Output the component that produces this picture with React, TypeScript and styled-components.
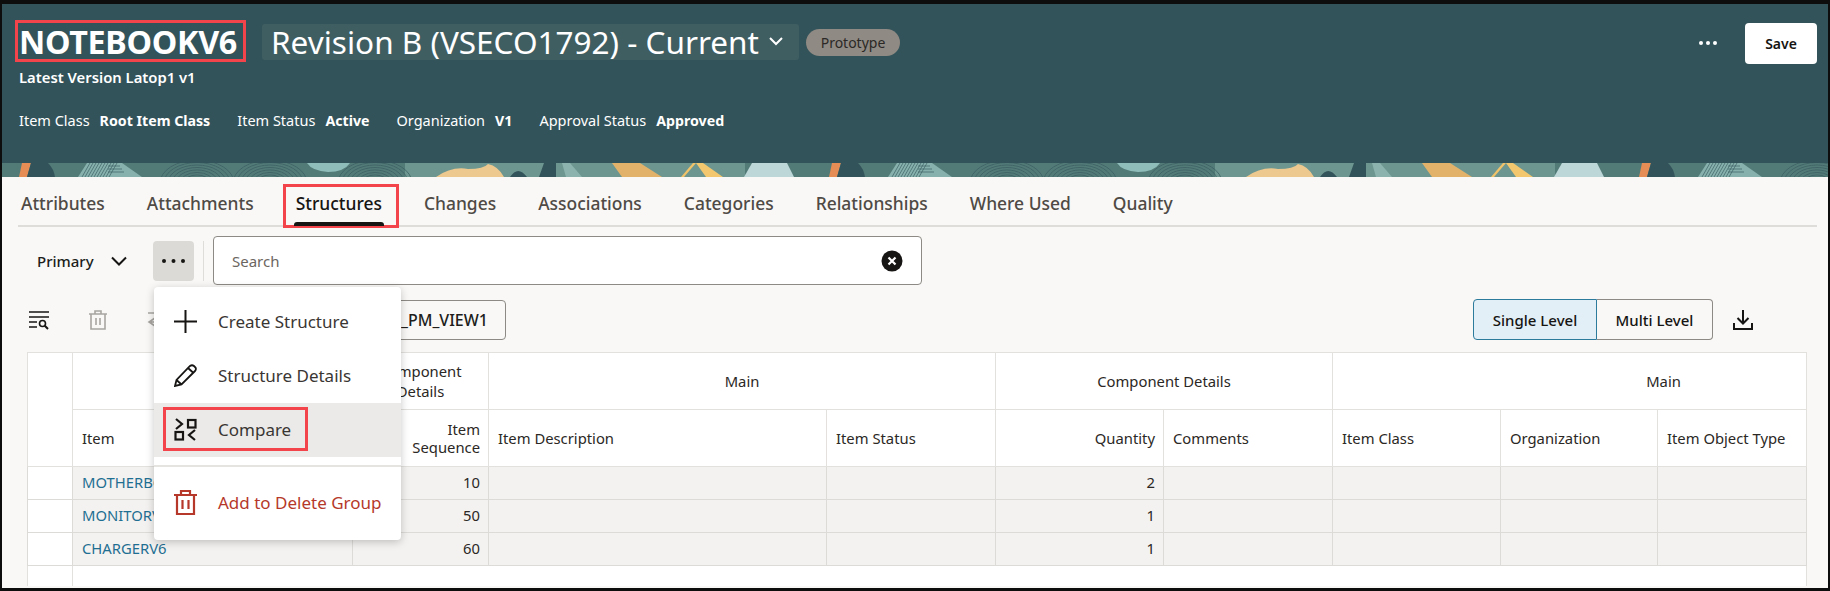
import { styled, createGlobalStyle } from "styled-components";

const GlobalStyle = createGlobalStyle`
  html, body { margin: 0; padding: 0; background: #0d0d0d; }
  body { font-family: "Noto Sans", "Open Sans", sans-serif; }
  * { box-sizing: border-box; }
`;

const Page = styled.div`
  width: 1830px;
  height: 591px;
  padding: 4px 2px 3px;
  display: flex;
  flex-direction: column;
  overflow: hidden;
  background: #0d0d0d;
`;

const Header = styled.header`
  height: 159px;
  flex: none;
  background: #33535a;
  color: #fff;
  padding: 16px 11px 0 13px;
`;

const TitleRow = styled.div`
  display: flex;
  align-items: flex-start;
  height: 44px;
`;

const Title = styled.h1`
  margin: 0;
  width: 231px;
  height: 42px;
  border: 3px solid #f2444a;
  padding-left: 1px;
  display: flex;
  align-items: center;
  font-size: 32.3px;
  font-weight: 700;
  letter-spacing: -0.3px;
`;

const RevisionSelect = styled.div`
  margin: 4px 0 0 16px;
  width: 537px;
  height: 36px;
  background: #3f5e62;
  border-radius: 3px;
  display: flex;
  align-items: center;
  padding: 0 0 2px 9px;
  font-size: 31.5px;
  white-space: nowrap;
  gap: 9px;
`;

const Pill = styled.span`
  margin: 9px 0 0 7px;
  width: 94px;
  height: 27px;
  border-radius: 14px;
  background: #8f8a83;
  color: #2b2826;
  font-size: 14px;
  display: flex;
  align-items: center;
  justify-content: center;
`;

const HeaderActions = styled.div`
  margin-left: auto;
  display: flex;
  align-items: flex-start;
`;

const DotsIcon = styled.svg`
  display: block;
  height: 6px;
`;

const MoreButton = styled.span`
  margin: 20px 27px 0 0;
  display: block;
`;

const SaveButton = styled.button`
  margin-top: 3px;
  width: 72px;
  height: 41px;
  border: none;
  border-radius: 4px;
  background: #fff;
  color: #161513;
  font: 600 14px "Noto Sans", sans-serif;
`;

const Subtitle = styled.div`
  margin: 3px 0 0 4px;
  line-height: 20px;
  font-size: 14.8px;
  font-weight: 600;
`;

const MetaRow = styled.div`
  margin: 23px 0 0 4px;
  display: flex;
  gap: 27px;
  line-height: 20px;
  font-size: 14.5px;
`;

const MetaItem = styled.span`
  display: flex;
  align-items: baseline;
  gap: 10px;
  b { font-weight: 700; font-size: 14.2px; }
`;

const BandSvg = styled.svg`
  display: block;
  flex: none;
  width: 100%;
  height: 14px;
`;

const Main = styled.main`
  position: relative;
  flex: 1;
  background: #f9f8f6;
  min-height: 0;
`;

const TabBar = styled.nav`
  margin: 0 11px 0 16px;
  height: 50px;
  padding: 7px 0 0 3px;
  display: flex;
  gap: 42px;
  border-bottom: 2px solid #dfddd9;
`;

const Tab = styled.a<{ $active?: boolean }>`
  position: relative;
  height: 40px;
  line-height: 39px;
  font-size: 17.45px;
  font-weight: 500;
  color: ${(p) => (p.$active ? "#161513" : "#4f4a45")};
  ${(p) =>
    p.$active &&
    `&::after {
      content: "";
      position: absolute;
      left: -2px;
      right: -2px;
      bottom: -2px;
      height: 4px;
      background: #161513;
      border-radius: 3px 3px 0 0;
    }
    &::before {
      content: "";
      position: absolute;
      left: -13px;
      right: -17px;
      top: 0;
      bottom: -4px;
      border: 3px solid #f2444a;
    }`}
`;

const SearchRow = styled.div`
  margin-top: 9px;
  padding-left: 35px;
  display: flex;
  align-items: center;
  height: 49px;
`;

const PrimaryLabel = styled.span`
  font-size: 15px;
  font-weight: 500;
  color: #201d1b;
  width: 74px;
`;

const ChevronIcon = styled.svg`
  display: block;
  flex: none;
`;

const ToolDots = styled.span`
  margin-left: 26px;
  width: 41px;
  height: 40px;
  border-radius: 4px;
  background: #dcdad7;
  display: flex;
  align-items: center;
  justify-content: center;
`;

const Separator = styled.span`
  margin: 0 9px 0 9px;
  width: 1px;
  height: 40px;
  background: #dfddd9;
`;

const SearchBox = styled.div`
  width: 709px;
  height: 49px;
  border: 1px solid #8d8984;
  border-radius: 4px;
  background: #fff;
  padding: 0 18px;
  display: flex;
  align-items: center;
  justify-content: space-between;
  font-size: 15px;
  color: #6b6661;
`;

const ActionRow = styled.div`
  margin-top: 14px;
  height: 41px;
  padding: 0 75px 0 27px;
  display: flex;
  align-items: center;
`;

const ActionIcon = styled.svg<{ $gap?: number }>`
  display: block;
  flex: none;
  margin-left: ${(p) => p.$gap ?? 0}px;
`;

const ViewButton = styled.span`
  margin-left: 30px;
  width: 310px;
  height: 40px;
  border: 1px solid #8d8984;
  border-radius: 4px;
  padding-right: 17px;
  display: flex;
  align-items: center;
  justify-content: flex-end;
  font-size: 16px;
  font-weight: 500;
  color: #201d1b;
`;

const Segments = styled.div`
  margin-left: auto;
  display: flex;
`;

const Segment = styled.span<{ $selected?: boolean }>`
  width: ${(p) => (p.$selected ? "124px" : "116px")};
  height: 41px;
  display: flex;
  align-items: center;
  justify-content: center;
  font-size: 15px;
  font-weight: 500;
  color: #161513;
  background: ${(p) => (p.$selected ? "#e3eff6" : "transparent")};
  border: 1px solid ${(p) => (p.$selected ? "#2c7a9c" : "#8d8984")};
  border-left-width: ${(p) => (p.$selected ? "1px" : "0")};
  border-radius: ${(p) => (p.$selected ? "4px 0 0 4px" : "0 4px 4px 0")};
`;

const GridWrap = styled.div`
  margin: 12px 21px 0 25px;
`;

const Grid = styled.table`
  width: 1779px;
  table-layout: fixed;
  border-collapse: collapse;
  background: #fff;
  font-size: 14.8px;
  color: #2b2825;
`;

const GroupCell = styled.th<{ $shift?: number }>`
  height: 57px;
  padding: 0 8px 0 ${(p) => p.$shift ?? 8}px;
  border: 1px solid #e3e1de;
  font-weight: 400;
  text-align: center;
  line-height: 20px;
`;

const ColumnCell = styled.th<{ $right?: boolean }>`
  height: 57px;
  padding: 0 8px 0 ${(p) => (p.$right ? 8 : 9)}px;
  border: 1px solid #e3e1de;
  font-weight: 400;
  line-height: 18px;
  text-align: ${(p) => (p.$right ? "right" : "left")};
`;

const DataCell = styled.td<{ $right?: boolean; $blank?: boolean }>`
  height: 33px;
  padding: 0 8px 2px 9px;
  border: 1px solid #dddbd8;
  background: ${(p) => (p.$blank ? "#fff" : "#f3f2f0")};
  text-align: ${(p) => (p.$right ? "right" : "left")};
`;

const ItemLink = styled.a`
  color: #1f6f92;
`;

const FillerCell = styled.td<{ $line?: boolean }>`
  height: 20px;
  padding: 0;
  border-right: ${(p) => (p.$line ? "1px solid #e3e1de" : "none")};
  border-left: ${(p) => (p.$line ? "1px solid #e3e1de" : "none")};
`;

const Menu = styled.div`
  position: absolute;
  left: 152px;
  top: 110px;
  width: 247px;
  height: 253px;
  padding-top: 8px;
  background: #fff;
  border-radius: 4px;
  box-shadow: 0 2px 8px rgba(0, 0, 0, 0.22);
`;

const MenuItem = styled.div<{ $hover?: boolean; $danger?: boolean }>`
  position: relative;
  height: 54px;
  padding: 0 0 ${(p) => (p.$danger ? 0 : 2)}px 20px;
  display: flex;
  align-items: center;
  gap: 21px;
  font-size: 17px;
  color: ${(p) => (p.$danger ? "#b5382a" : "#3a3633")};
  background: ${(p) => (p.$hover ? "#ebeae8" : "transparent")};
`;

const Highlight = styled.span`
  position: absolute;
  left: 9px;
  top: 4px;
  width: 145px;
  height: 44px;
  border: 3px solid #f2444a;
`;

const MenuDivider = styled.div`
  margin: 8px 0;
  height: 2px;
  background: #e6e4e1;
`;

const columns = [45, 280, 136, 338, 169, 168, 169, 168, 157, 149];

const rows = [
  { item: "MOTHERBOARDV6", sequence: 10, quantity: 2 },
  { item: "MONITORV6", sequence: 50, quantity: 1 },
  { item: "CHARGERV6", sequence: 60, quantity: 1 },
];

const fans = [197, 270, 375];
const fanRadii = [5, 9, 13, 17, 21, 25, 29, 33, 37];

// repeating strip of the header artwork, one tile is 810px
const Band = () => (
  <BandSvg viewBox="0 0 1826 14" preserveAspectRatio="none">
    <defs>
      <pattern id="band" x="-2" width="810" height="14" patternUnits="userSpaceOnUse">
        <rect width="810" height="14" fill="#527a77" />
        <rect x="405" width="340" height="14" fill="#6c968f" />
        <path d="M78 14 L87 0 H122 L142 14 Z" fill="#86b1ac" />
        <g stroke="#3c5f63" strokeWidth="0.7">
          {[90, 93, 96, 99, 102, 105, 108, 111, 114, 117].map((x) => (
            <path key={x} d={`M${x} 0 L${x - 8} 14`} />
          ))}
          <path d="M108 3 H120 M108 6 H122 M108 9 H124" />
        </g>
        {fans.map((cx) => (
          <g key={cx} fill="none" stroke="#3c5f63" strokeWidth="0.8">
            {fanRadii.map((r) => (
              <ellipse key={r} cx={cx} cy="20" rx={r} ry={r * 0.62} />
            ))}
          </g>
        ))}
        <path d="M307 0 H350 Q344 9 328 9 Q312 8 307 0 Z" fill="#8fbdb9" />
        <path d="M436 14 Q452 3 468 6 Q484 6 488 1 Q498 3 504 14 Z" fill="#edc88f" />
        <path d="M510 14 Q518 2 527 14 Z M539 14 L544 0 H556 V14 Z" fill="#33535a" />
        <path d="M562 0 H570 L582 14 H566 Z" fill="#8cb3ae" />
        <path d="M612 0 H640 L662 14 H622 Z" fill="#e2b26b" />
        <path d="M693 0 L681 14 H684 L696 0 Z" fill="#f0c36a" />
        <path d="M696 0 H703 L723 14 H706 Z" fill="#f3c76e" />
        <path d="M752 0 H787 L794 14 H744 Z" fill="#bdd6d8" />
        <path d="M22 0 H31 L27 14 H19 Z" fill="#e58d55" />
        <path d="M31 0 H48 Q54 6 55 14 H27 Z" fill="#33535a" />
      </pattern>
    </defs>
    <rect width="1826" height="14" fill="url(#band)" />
  </BandSvg>
);

const Dots = ({ color, step = 7 }: { color: string; step?: number }) => (
  <DotsIcon width={step * 2 + 6} viewBox={`0 0 ${step * 2 + 6} 6`}>
    <circle cx="3" cy="3" r="2" fill={color} />
    <circle cx={3 + step} cy="3" r="2" fill={color} />
    <circle cx={3 + step * 2} cy="3" r="2" fill={color} />
  </DotsIcon>
);

const App = () => {
  return (
    <Page>
      <GlobalStyle />
      <Header>
        <TitleRow>
          <Title>NOTEBOOKV6</Title>
          <RevisionSelect>
            Revision B (VSECO1792) - Current
            <ChevronIcon width="16" height="10" viewBox="0 0 16 10" fill="none" stroke="#fff" strokeWidth="2">
              <path d="M2 2 L8 8 L14 2" />
            </ChevronIcon>
          </RevisionSelect>
          <Pill>Prototype</Pill>
          <HeaderActions>
            <MoreButton>
              <Dots color="#fff" />
            </MoreButton>
            <SaveButton>Save</SaveButton>
          </HeaderActions>
        </TitleRow>
        <Subtitle>Latest Version Latop1 v1</Subtitle>
        <MetaRow>
          <MetaItem>Item Class <b>Root Item Class</b></MetaItem>
          <MetaItem>Item Status <b>Active</b></MetaItem>
          <MetaItem>Organization <b>V1</b></MetaItem>
          <MetaItem>Approval Status <b>Approved</b></MetaItem>
        </MetaRow>
      </Header>
      <Band />
      <Main>
        <TabBar>
          <Tab>Attributes</Tab>
          <Tab>Attachments</Tab>
          <Tab $active>Structures</Tab>
          <Tab>Changes</Tab>
          <Tab>Associations</Tab>
          <Tab>Categories</Tab>
          <Tab>Relationships</Tab>
          <Tab>Where Used</Tab>
          <Tab>Quality</Tab>
        </TabBar>
        <SearchRow>
          <PrimaryLabel>Primary</PrimaryLabel>
          <ChevronIcon width="16" height="10" viewBox="0 0 16 10" fill="none" stroke="#161513" strokeWidth="2">
            <path d="M1 1.5 L8 8.5 L15 1.5" />
          </ChevronIcon>
          <ToolDots>
            <Dots color="#161513" step={9.5} />
          </ToolDots>
          <Separator />
          <SearchBox>
            Search
            <ChevronIcon width="22" height="22" viewBox="0 0 22 22">
              <circle cx="11" cy="11" r="10.5" fill="#161513" />
              <path d="M7.5 7.5 L14.5 14.5 M14.5 7.5 L7.5 14.5" stroke="#fff" strokeWidth="2.2" />
            </ChevronIcon>
          </SearchBox>
        </SearchRow>
        <ActionRow>
          <ActionIcon width="20" height="20" viewBox="0 0 20 20" fill="none" stroke="#161513" strokeWidth="1.6">
            <path d="M0 2 H20 M0 7 H20 M0 12 H8 M0 17 H8" />
            <circle cx="13.5" cy="13.5" r="3" />
            <path d="M15.8 15.8 L19 19" strokeWidth="2" />
          </ActionIcon>
          <ActionIcon $gap={39} width="20" height="20" viewBox="0 0 20 20" fill="none" stroke="#a8a5a1" strokeWidth="1.6">
            <path d="M1 4 H19 M7 4 V1 H13 V4 M3 4 V19 H17 V4 M8 8 V15 M12 8 V15" />
          </ActionIcon>
          <ActionIcon $gap={38} width="20" height="20" viewBox="0 0 20 20" fill="none" stroke="#a8a5a1" strokeWidth="1.6">
            <path d="M2 3 H18 M9 8 L3 12 L9 16 M3 12 H18" />
          </ActionIcon>
          <ViewButton>_PM_VIEW1</ViewButton>
          <Segments>
            <Segment $selected>Single Level</Segment>
            <Segment>Multi Level</Segment>
          </Segments>
          <ActionIcon $gap={20} width="20" height="20" viewBox="0 0 20 20" fill="none" stroke="#161513" strokeWidth="2">
            <path d="M10 0 V13 M4.5 8 L10 13.5 L15.5 8 M1 13 V19 H19 V13" />
          </ActionIcon>
        </ActionRow>
        <GridWrap>
          <Grid>
            <colgroup>
              {columns.map((w, i) => (
                <col key={i} width={w} />
              ))}
            </colgroup>
            <thead>
              <tr>
                <GroupCell rowSpan={2} />
                <GroupCell />
                <GroupCell>Component Details</GroupCell>
                <GroupCell colSpan={2}>Main</GroupCell>
                <GroupCell colSpan={2}>Component Details</GroupCell>
                <GroupCell colSpan={3} $shift={196}>Main</GroupCell>
              </tr>
              <tr>
                <ColumnCell>Item</ColumnCell>
                <ColumnCell $right>Item<br />Sequence</ColumnCell>
                <ColumnCell>Item Description</ColumnCell>
                <ColumnCell>Item Status</ColumnCell>
                <ColumnCell $right>Quantity</ColumnCell>
                <ColumnCell>Comments</ColumnCell>
                <ColumnCell>Item Class</ColumnCell>
                <ColumnCell>Organization</ColumnCell>
                <ColumnCell>Item Object Type</ColumnCell>
              </tr>
            </thead>
            <tbody>
              {rows.map((row) => (
                <tr key={row.item}>
                  <DataCell $blank />
                  <DataCell><ItemLink>{row.item}</ItemLink></DataCell>
                  <DataCell $right>{row.sequence}</DataCell>
                  <DataCell />
                  <DataCell />
                  <DataCell $right>{row.quantity}</DataCell>
                  <DataCell />
                  <DataCell />
                  <DataCell />
                  <DataCell />
                </tr>
              ))}
              <tr>
                <FillerCell $line />
                <FillerCell colSpan={9} $line />
              </tr>
            </tbody>
          </Grid>
        </GridWrap>
        <Menu>
          <MenuItem>
            <ChevronIcon width="23" height="23" viewBox="0 0 23 23" fill="none" stroke="#161513" strokeWidth="2">
              <path d="M11.5 0 V23 M0 11.5 H23" />
            </ChevronIcon>
            Create Structure
          </MenuItem>
          <MenuItem>
            <ChevronIcon width="23" height="23" viewBox="0 0 23 23" fill="none" stroke="#161513" strokeWidth="1.8">
              <path d="M1 22 L2.5 16 L16 2 Q18 0.5 20 2 L21.5 3.5 Q22.5 5.5 21 7 L7.5 20.5 Z M14 4 L19.5 9 M2.5 16 L7.5 20.5" />
            </ChevronIcon>
            Structure Details
          </MenuItem>
          <MenuItem $hover>
            <Highlight />
            <ChevronIcon width="23" height="23" viewBox="0 0 23 23" fill="none" stroke="#161513" strokeWidth="2.2">
              <path d="M2 1 L8 6 L2 11" />
              <rect x="14" y="2" width="7.5" height="7.5" />
              <rect x="1.5" y="14" width="7.5" height="7.5" />
              <path d="M21 12 L15 17 L21 22" />
            </ChevronIcon>
            Compare
          </MenuItem>
          <MenuDivider />
          <MenuItem $danger>
            <ChevronIcon width="23" height="25" viewBox="0 0 23 25" fill="none" stroke="#b5382a" strokeWidth="2.2">
              <path d="M0 5 H23 M7 5 V1 H16 V5 M3 5 V24 H20 V5 M8.5 10 V19 M14.5 10 V19" />
            </ChevronIcon>
            Add to Delete Group
          </MenuItem>
        </Menu>
      </Main>
    </Page>
  );
};

export default App;
